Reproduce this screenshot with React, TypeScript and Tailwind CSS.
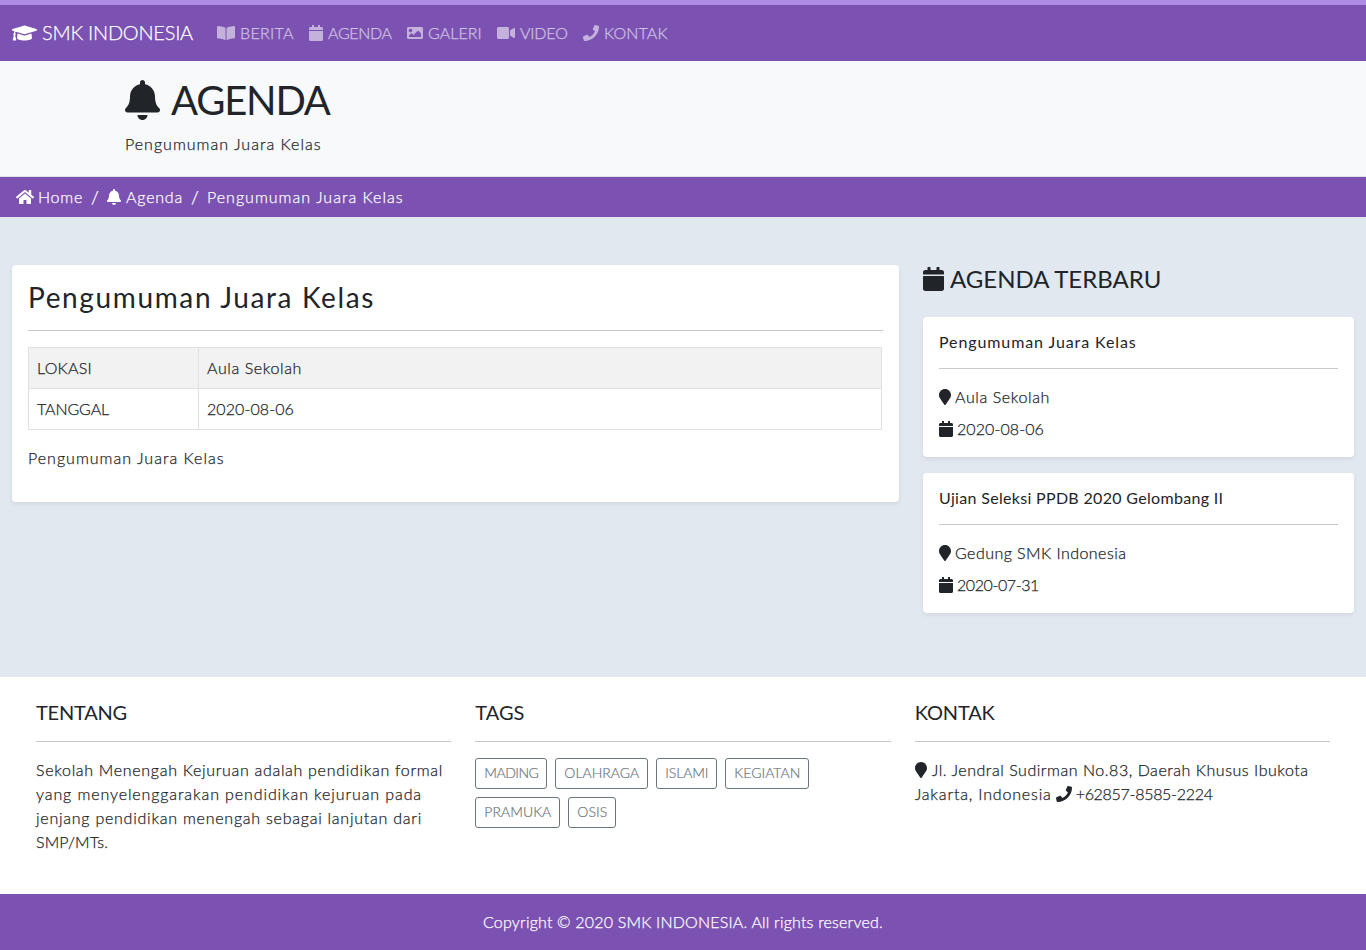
import type { ReactNode } from "react";
import { FaBell, FaBookOpen, FaCalendar, FaGraduationCap, FaHome, FaImage, FaMapMarker, FaPhone, FaVideo } from "react-icons/fa";

const heading = "font-normal [-webkit-text-stroke:0]";
const line = "block pb-px leading-[23px]";

const nav = [
  { Icon: FaBookOpen, size: "w-[18px]", label: "BERITA", track: "w-[53px] tracking-[0.3px]" },
  { Icon: FaCalendar, size: "w-[14px]", label: "AGENDA", track: "w-[63px] tracking-[-0.35px]" },
  { Icon: FaImage, size: "w-4", label: "GALERI", track: "w-[53px] tracking-[0.05px]" },
  { Icon: FaVideo, size: "w-[18px]", label: "VIDEO", track: "w-[47px] tracking-[-0.15px]" },
  { Icon: FaPhone, size: "w-4", label: "KONTAK", track: "w-[63px] tracking-[0.15px]" },
];

const events = [
  { title: "Pengumuman Juara Kelas", tt: "tracking-[0.9px]", place: "Aula Sekolah", pt: "tracking-[0.615px]", date: "2020-08-06", dt: "tracking-[0.09px]" },
  { title: "Ujian Seleksi PPDB 2020 Gelombang II", tt: "tracking-[0.32px]", place: "Gedung SMK Indonesia", pt: "tracking-[0.45px]", date: "2020-07-31", dt: "tracking-[-0.409px]" },
];

const tags = [
  { label: "MADING", cls: "w-[72px] tracking-[-0.508px]" },
  { label: "OLAHRAGA", cls: "w-[93px] tracking-[0.025px]" },
  { label: "ISLAMI", cls: "w-[61px] tracking-[-0.128px]" },
  { label: "KEGIATAN", cls: "w-[84px] tracking-[0.023px]" },
  { label: "PRAMUKA", cls: "w-[85px] tracking-[0.038px]" },
  { label: "OSIS", cls: "w-[48px] tracking-[0.07px]" },
];

function Column({ title, track, children }: { title: string; track: string; children: ReactNode }) {
  return (
    <section className="min-w-0 flex-1 px-3">
      <h5 className={`pb-[2px] text-xl leading-[22px] ${heading} ${track}`}>{title}</h5>
      <hr className="my-4 border-[#c8c9ca]" />
      {children}
    </section>
  );
}

export default function App() {
  return (
    <div className="flex h-[950px] w-full flex-col overflow-hidden bg-[#e1e8f0] font-['Lato','Liberation_Sans',sans-serif] text-base font-light whitespace-nowrap text-[#212529] [-webkit-text-stroke:0.25px]">
      <nav className="flex h-[61px] shrink-0 items-center border-t-[5px] border-[#b08be3] bg-[#7b52b1] px-3 text-white">
        <a className="mr-4 flex w-[181px] items-center gap-[5px] text-xl tracking-[-0.236px]">
          <FaGraduationCap className="h-5 w-[25px] [-webkit-text-stroke:0]" />
          <span className="pb-[2px] leading-[28px]">SMK INDONESIA</span>
        </a>
        {nav.map(({ Icon, size, label, track }) => (
          <a key={label} className="flex items-center gap-[5px] px-2 text-white/55">
            <Icon className={`h-4 ${size}`} />
            <span className={`${line} ${track}`}>{label}</span>
          </a>
        ))}
      </nav>

      <header className="h-[116px] shrink-0 border-b border-[#dee2e6] bg-[#f8f9fb] px-[125px] pt-[15px]">
        <h1 className={`flex h-12 items-center gap-[11px] text-[40px] leading-[48px] tracking-[-1.2px] ${heading}`}>
          <FaBell className="h-10 w-[35px]" />
          AGENDA
        </h1>
        <p className={`mt-2 tracking-[1.01px] ${line}`}>Pengumuman Juara Kelas</p>
      </header>

      <div className="flex h-10 shrink-0 items-center bg-[#7b52b1] px-4 text-white">
        <FaHome className="h-4 w-[18px]" />
        <span className={`ml-1 w-[45px] tracking-[0.754px] ${line}`}>Home</span>
        <span className="w-6 text-center text-lg leading-6">/</span>
        <FaBell className="h-4 w-[14px]" />
        <span className={`ml-[5px] w-[57px] tracking-[0.789px] ${line}`}>Agenda</span>
        <span className="w-6 text-center text-lg leading-6">/</span>
        <span className={`tracking-[1.01px] ${line}`}>Pengumuman Juara Kelas</span>
      </div>

      <main className="flex h-[460px] shrink-0 items-start gap-6 px-3 pt-12">
        <article className="h-[237px] w-[887px] rounded bg-white p-4 shadow-[0_2px_4px_rgba(0,0,0,0.075)]">
          <h3 className={`pb-[2px] text-[28px] leading-[32px] tracking-[1.63px] ${heading}`}>Pengumuman Juara Kelas</h3>
          <hr className="mt-[15px] mb-4 border-[#c8c9ca]" />
          <table className="w-[854px] table-fixed border-collapse">
            <tbody>
              <tr className="h-[41px] bg-[#f2f2f2]">
                <td className="w-[170px] border border-[#dee2e6] px-2 tracking-[0.258px]"><span className={line}>LOKASI</span></td>
                <td className="border border-[#dee2e6] px-2 tracking-[0.615px]"><span className={line}>Aula Sekolah</span></td>
              </tr>
              <tr className="h-[41px]">
                <td className="border border-[#dee2e6] px-2 tracking-[-0.112px]"><span className={line}>TANGGAL</span></td>
                <td className="border border-[#dee2e6] px-2 tracking-[0.09px]"><span className={line}>2020-08-06</span></td>
              </tr>
            </tbody>
          </table>
          <p className={`mt-4 tracking-[1.01px] ${line}`}>Pengumuman Juara Kelas</p>
        </article>

        <aside className="w-[431px]">
          <h4 className={`mb-[25px] flex h-[27px] items-center gap-1.5 text-2xl leading-[27px] ${heading}`}>
            <FaCalendar className="h-6 w-[21px]" />
            AGENDA TERBARU
          </h4>
          {events.map((e) => (
            <div key={e.title} className="mb-4 h-[140px] rounded bg-white p-4 shadow-[0_2px_4px_rgba(0,0,0,0.075)]">
              <h6 className={`pb-[2px] leading-[17px] ${heading} ${e.tt}`}>{e.title}</h6>
              <hr className="my-4 border-[#c8c9ca]" />
              <p className="mb-2 flex h-6 items-center gap-1">
                <FaMapMarker className="h-4 w-3" />
                <span className={`${line} ${e.pt}`}>{e.place}</span>
              </p>
              <p className="flex h-6 items-center gap-1">
                <FaCalendar className="h-4 w-[14px]" />
                <span className={`${line} ${e.dt}`}>{e.date}</span>
              </p>
            </div>
          ))}
        </aside>
      </main>

      <footer className="flex h-[217px] shrink-0 bg-white px-6 pt-6">
        <Column title="TENTANG" track="tracking-[-0.21px]">
          <p>
            <span className={`${line} tracking-[0.694px]`}>Sekolah Menengah Kejuruan adalah pendidikan formal</span>
            <span className={`${line} tracking-[0.893px]`}>yang menyelenggarakan pendidikan kejuruan pada</span>
            <span className={`${line} tracking-[0.758px]`}>jenjang pendidikan menengah sebagai lanjutan dari</span>
            <span className={`${line} tracking-[0.127px]`}>SMP/MTs.</span>
          </p>
        </Column>
        <Column title="TAGS" track="tracking-normal">
          <div className="flex flex-wrap gap-2">
            {tags.map((t) => (
              <a key={t.label} className={`flex h-[31px] items-center justify-center rounded-[3px] border border-[#6c757d] pb-[2px] text-sm text-[#6c757d] [-webkit-text-stroke:0.2px] ${t.cls}`}>{t.label}</a>
            ))}
          </div>
        </Column>
        <Column title="KONTAK" track="tracking-[-0.146px]">
          <p className="flex h-6 items-center gap-[5px]">
            <FaMapMarker className="h-4 w-3" />
            <span className={`${line} tracking-[0.54px]`}>Jl. Jendral Sudirman No.83, Daerah Khusus Ibukota</span>
          </p>
          <p className="flex h-6 items-center gap-1">
            <span className={`${line} tracking-[0.836px]`}>Jakarta, Indonesia</span>
            <FaPhone className="h-4 w-4" />
            <span className={`${line} tracking-[-0.298px]`}>+62857-8585-2224</span>
          </p>
        </Column>
      </footer>

      <div className="flex h-14 shrink-0 items-center justify-center bg-[#7b52b1] tracking-[0.195px] text-white">
        <span className={line}>Copyright © 2020 SMK INDONESIA. All rights reserved.</span>
      </div>
    </div>
  );
}
